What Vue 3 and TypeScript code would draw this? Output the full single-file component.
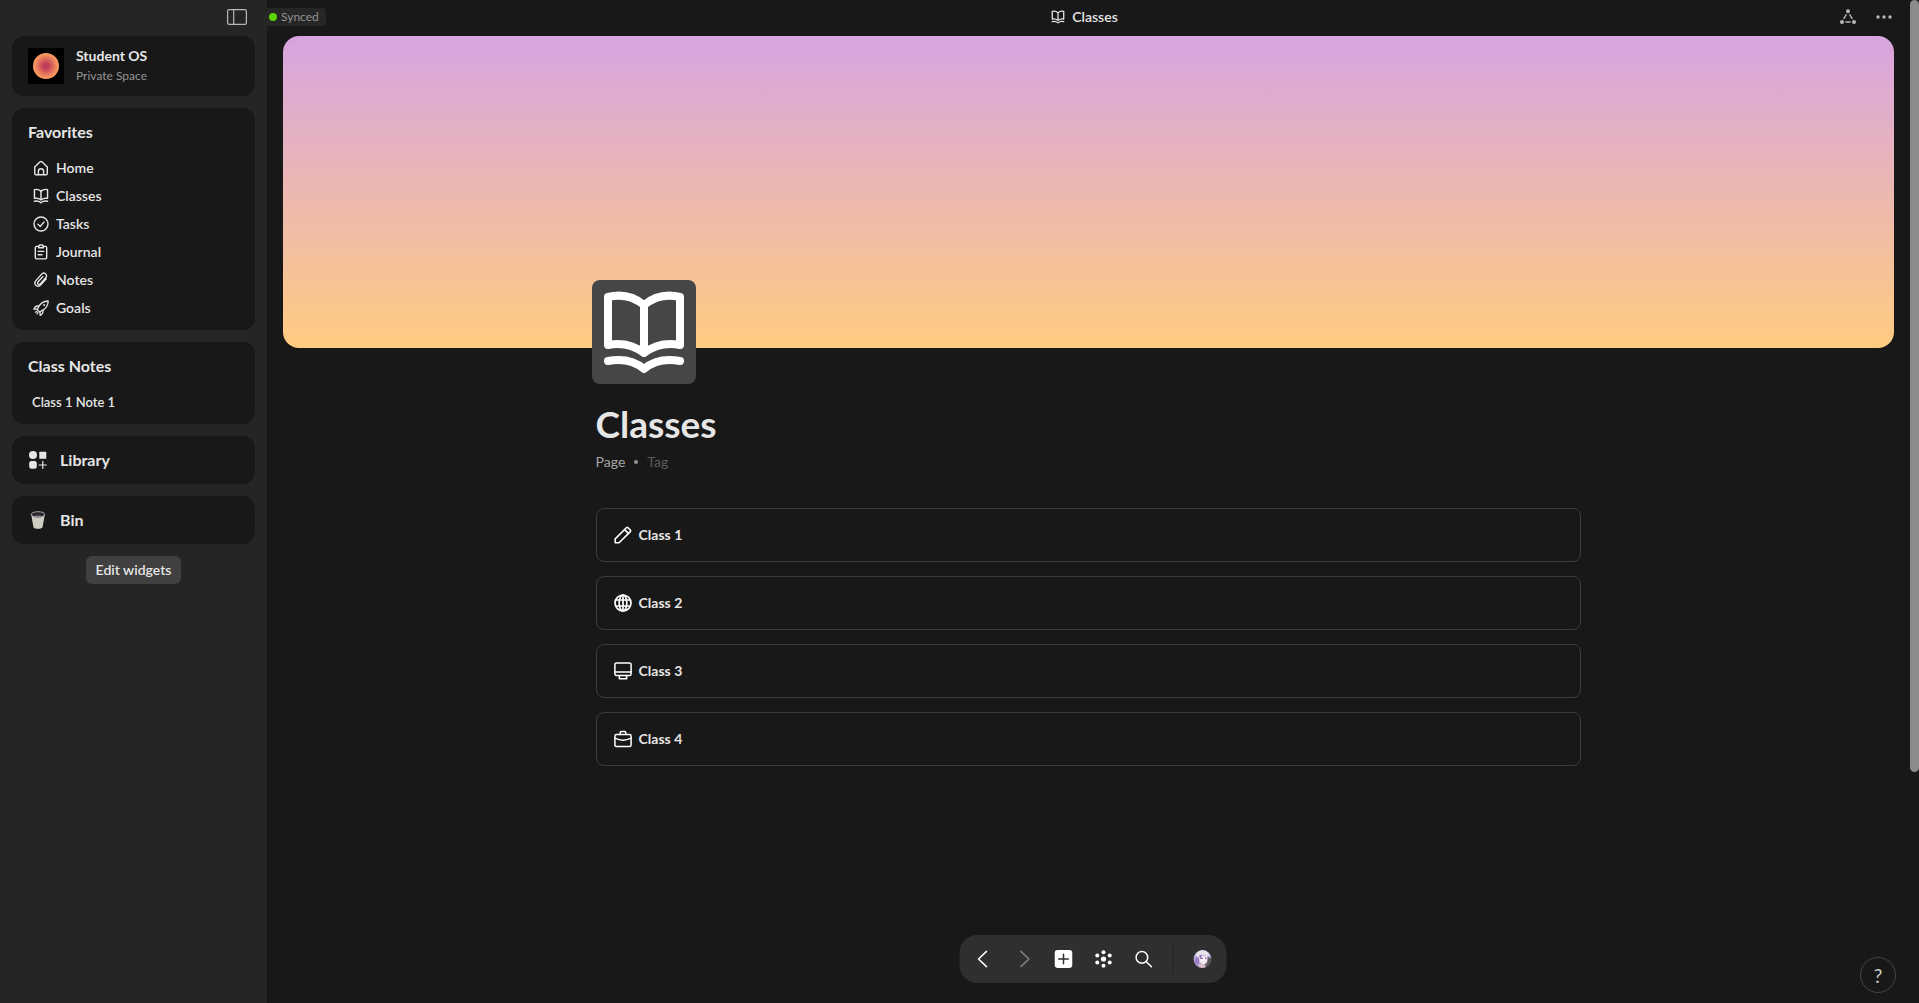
<script setup lang="ts">
import { h } from 'vue'

type Shape = [tag: string, attrs: Record<string, string | number>]
interface Glyph { box: string; width: number; shapes: Shape[] }

const line = (d: string): Shape => ['path', { d }]
const solid = (tag: string, attrs: Record<string, string | number>): Shape => [tag, { ...attrs, fill: 'currentColor', stroke: 'none' }]
const dot = (cx: number, cy: number, r: number) => solid('circle', { cx, cy, r })

const glyphs: Record<string, Glyph> = {
  panel: { box: '0 0 20 16', width: 1.2, shapes: [['rect', { x: 0.6, y: 0.6, width: 18.8, height: 14.8, rx: 1.6 }], line('M6.7 1V15')] },
  home: { box: '0 0 16 16', width: 1.4, shapes: [line('M1.7 7 7.1 1.8Q8 1 8.9 1.8L14.3 7V13.6Q14.3 14.8 13.1 14.8H2.9Q1.7 14.8 1.7 13.6Z'), line('M5.4 14.6V11.2Q5.4 8.8 8 8.8T10.6 11.2V14.6')] },
  book: { box: '8 7 88 88', width: 8, shapes: [line('M16 16Q36 11 52 24Q68 11 88 16V64Q68 60 52 72Q36 60 16 64Z'), line('M52 25V70'), line('M16 80Q38 76 52 88Q66 76 88 80')] },
  check: { box: '0 0 16 16', width: 1.4, shapes: [['circle', { cx: 8, cy: 8, r: 7 }], line('M5 8.3 7.2 10.4 11.1 6')] },
  clipboard: { box: '0 0 16 16', width: 1.4, shapes: [line('M5.6 2.4H3.6Q2.3 2.4 2.3 3.7V13.6Q2.3 14.9 3.6 14.9H12.4Q13.7 14.9 13.7 13.6V3.7Q13.7 2.4 12.4 2.4H10.4'), line('M5.6 3.8V2.6Q5.6 1 7.2 1H8.8Q10.4 1 10.4 2.6V3.8Z'), line('M5.2 7.4H10.8M5.2 10.8H9')] },
  clip: { box: '0 0 16 16', width: 1.4, shapes: [line('M13.2 6.9 7.8 12.9C4.7 16.3-.2 12.4 2.7 8.9L8.4 2.4C11-.6 15.2 2.7 12.8 5.7L7.5 11.8C5.9 13.6 3.6 11.8 5 10L9.8 4.6')] },
  rocket: { box: '0 0 16 16', width: 1.3, shapes: [line('M5 8.2C7 3.4 10.2 1 15.2 1 15.2 5.8 12.8 9 8 11.2L6.6 12 4.2 9.6Z'), line('M5.6 6.2C3.3 5.5 1.8 6.8.8 9.2L4.4 9.2M9.8 10.4C10.6 12.8 9.4 14.2 7.2 15.4L7 12'), line('M3.8 11.4 2.4 12.2M4.8 12.6 4 13.8'), dot(11.2, 5, 1)] },
  pencil: { box: '0 0 18 18', width: 1.6, shapes: [line('M1.2 12.9 12.4 1.7Q13.2 1 14 1.7L16.3 4Q17 4.8 16.3 5.6L5.1 16.8H1.2Z'), line('M10.6 3.6 14.4 7.4')] },
  globe: { box: '0 0 18 18', width: 1.7, shapes: [['circle', { cx: 9, cy: 9, r: 8 }], ['ellipse', { cx: 9, cy: 9, rx: 3.8, ry: 8 }], line('M9 1V17M1.8 6H16.2M1.8 12H16.2')] },
  monitor: { box: '0 0 18 18', width: 1.5, shapes: [['rect', { x: 0.9, y: 0.9, width: 16.2, height: 12.6, rx: 1.6 }], line('M1 10H17M5.6 13.7 5.2 16.7H12.8L12.4 13.7')] },
  briefcase: { box: '0 0 18 18', width: 1.5, shapes: [['rect', { x: 0.9, y: 4.6, width: 16.2, height: 12, rx: 1.6 }], line('M6.2 4.4V2.6Q6.2 1.5 7.3 1.5H10.7Q11.8 1.5 11.8 2.6V4.4M1 8.2Q9 12.2 17 8.2')] },
  library: { box: '0 0 18 18', width: 1.2, shapes: [dot(4, 4, 4), solid('rect', { x: 10.3, y: 0.8, width: 7, height: 7, rx: 0.6 }), solid('rect', { x: 0.2, y: 10, width: 7.6, height: 7.8, rx: 2.2 }), line('M13.8 10.4V17.6M10.2 14H17.4')] },
  graph: { box: '0 0 16 16', width: 1.3, shapes: [dot(8, 2.2, 2), dot(2, 13, 2), dot(14, 13, 2), line('M6.2 5.6 3.9 9.6M9.8 5.6 12.1 9.6M5.9 13H10.1')] },
  more: { box: '0 0 16 16', width: 1, shapes: [dot(2, 8, 1.7), dot(8, 8, 1.7), dot(14, 8, 1.7)] },
  back: { box: '0 0 18 18', width: 1.5, shapes: [line('M12 1.4 4 9 12 16.6')] },
  forward: { box: '0 0 18 18', width: 1.5, shapes: [line('M6.4 1.4 14.4 9 6.4 16.6')] },
  plus: { box: '0 0 18 18', width: 1.5, shapes: [solid('rect', { x: 0, y: 0, width: 18, height: 18, rx: 3.4 }), ['path', { d: 'M9 4.2V13.8M4.2 9H13.8', stroke: '#2f2f2f' }]] },
  nodes: { box: '0 0 18 18', width: 1, shapes: [dot(9, 9, 2.6), dot(9, 2.2, 2), dot(9, 15.8, 2), dot(2.8, 5.4, 2), dot(15.2, 5.4, 2), dot(2.8, 12.6, 2), dot(15.2, 12.6, 2)] },
  search: { box: '0 0 18 18', width: 1.5, shapes: [['circle', { cx: 7.4, cy: 7.4, r: 5.8 }], line('M11.7 11.7 17 16.8')] },
}

const Icon = (props: { name: string }) => {
  const g = glyphs[props.name]
  return h('svg', { viewBox: g.box, fill: 'none', stroke: 'currentColor', 'stroke-width': g.width, 'stroke-linecap': 'round', 'stroke-linejoin': 'round', 'aria-hidden': 'true' },
    g.shapes.map(([tag, attrs]) => h(tag, attrs)))
}
Icon.props = ['name']

const favorites = [
  { label: 'Home', icon: 'home' },
  { label: 'Classes', icon: 'book' },
  { label: 'Tasks', icon: 'check' },
  { label: 'Journal', icon: 'clipboard' },
  { label: 'Notes', icon: 'clip' },
  { label: 'Goals', icon: 'rocket' },
]
const classes = [
  { label: 'Class 1', icon: 'pencil' },
  { label: 'Class 2', icon: 'globe' },
  { label: 'Class 3', icon: 'monitor' },
  { label: 'Class 4', icon: 'briefcase' },
]
</script>

<template>
  <div class="app">
    <aside class="sidebar">
      <div class="sidebar-head">
        <button class="icon-button" aria-label="Toggle sidebar"><Icon name="panel" class="panel-icon" /></button>
      </div>

      <section class="card space">
        <svg class="space-icon" viewBox="0 0 36 36" aria-hidden="true">
          <defs>
            <radialGradient id="sun">
              <stop offset="0.2" stop-color="#c13f5b" />
              <stop offset="0.9" stop-color="#f9975f" />
            </radialGradient>
          </defs>
          <rect width="36" height="36" rx="2" fill="#000" />
          <circle cx="18" cy="18" r="13" fill="url(#sun)" />
        </svg>
        <div>
          <div class="space-name">Student OS</div>
          <div class="space-kind">Private Space</div>
        </div>
      </section>

      <nav class="card list" aria-label="Favorites">
        <h2>Favorites</h2>
        <a v-for="f in favorites" :key="f.label" href="#" class="item">
          <Icon :name="f.icon" class="item-icon" />{{ f.label }}
        </a>
      </nav>

      <nav class="card list" aria-label="Class Notes">
        <h2>Class Notes</h2>
        <a href="#" class="item note">Class 1 Note 1</a>
      </nav>

      <a href="#" class="card shortcut"><Icon name="library" class="shortcut-icon" />Library</a>
      <a href="#" class="card shortcut">
        <svg class="shortcut-icon" viewBox="0 0 18 18" aria-hidden="true">
          <path d="M2.2 3.4 4.4 16Q4.7 17.8 9 17.8T13.6 16L15.8 3.4Z" fill="#cfccc2" />
          <ellipse cx="9" cy="3.4" rx="6.8" ry="2.7" fill="#29262c" stroke="#b5b3b4" stroke-width="0.9" />
          <path d="M3.6 5.3Q9 3.8 14.4 5.3 12 7 9 7T3.6 5.3Z" fill="#8f8b93" />
        </svg>
        Bin
      </a>

      <button class="edit">Edit widgets</button>
    </aside>

    <main class="main">
      <div class="page">
        <header class="top">
          <div class="sync"><span class="sync-dot"></span>Synced</div>
          <div class="crumb"><Icon name="book" class="crumb-icon" />Classes</div>
          <div class="actions">
            <button class="icon-button" aria-label="Graph"><Icon name="graph" class="action-icon" /></button>
            <button class="icon-button" aria-label="More"><Icon name="more" class="action-icon" /></button>
          </div>
        </header>

        <div class="cover"></div>

        <article class="content">
          <div class="page-icon"><Icon name="book" class="page-glyph" /></div>
          <h1>Classes</h1>
          <div class="meta"><span>Page</span><span class="bullet"></span><span class="tag">Tag</span></div>
          <div class="classes">
            <a v-for="c in classes" :key="c.label" href="#" class="class-card">
              <Icon :name="c.icon" class="class-icon" />{{ c.label }}
            </a>
          </div>
        </article>
      </div>

      <div class="scroll"><div class="thumb"></div></div>

      <nav class="dock" aria-label="Navigation">
        <button class="dock-button" aria-label="Back"><Icon name="back" class="dock-icon" /></button>
        <button class="dock-button muted" aria-label="Forward"><Icon name="forward" class="dock-icon" /></button>
        <button class="dock-button" aria-label="Create"><Icon name="plus" class="dock-icon" /></button>
        <button class="dock-button" aria-label="Graph"><Icon name="nodes" class="dock-icon" /></button>
        <button class="dock-button" aria-label="Search"><Icon name="search" class="dock-icon" /></button>
        <span class="divider"></span>
        <button class="dock-button" aria-label="Profile">
          <svg class="dock-icon" viewBox="0 0 18 18" aria-hidden="true">
            <defs><clipPath id="round"><circle cx="9" cy="9" r="9" /></clipPath></defs>
            <g clip-path="url(#round)">
              <rect width="18" height="18" fill="#6c6a6d" />
              <path d="M0 7Q1 0 9-1 17 0 18 8L14 7 13 12 6 18H2L0 12Z" fill="#b8a6d8" />
              <path d="M2 5Q5 0 10 0 15 1 16 6L10 5 5 8Z" fill="#e9e4ea" />
              <path d="M6 7 13.5 5.5Q15 12 11.5 14L8.5 14.5 6 11Z" fill="#f6ecf3" />
              <path d="M2 8 5 7 5.5 13 3.5 15 1 12Z" fill="#9a7fc7" />
              <path d="M5.5 5.5 8.5 4.5 7 9Z" fill="#8e74bb" />
              <path d="M7 8.4H9M11.6 8H13" stroke="#7452a5" stroke-width="1.4" />
              <path d="M5.5 14.5 8 13.5 11.5 14.5 12 18H6Z" fill="#dcbcc6" />
              <path d="M15 9 18 8V16L13 17Z" fill="#555456" />
            </g>
          </svg>
        </button>
      </nav>

      <button class="help" aria-label="Help">?</button>
    </main>
  </div>
</template>

<style>
body {
  margin: 0;
  background: #181818;
}
</style>

<style scoped>
* {
  box-sizing: border-box;
}
.app {
  display: flex;
  min-height: 100vh;
  background: #181818;
  color: #e6e6e6;
  font: 600 14px/20px Lato, "Open Sans", sans-serif;
}
a {
  color: inherit;
  text-decoration: none;
}
button {
  padding: 0;
  border: 0;
  background: none;
  color: inherit;
  font: inherit;
  cursor: pointer;
}
svg {
  display: block;
  flex: none;
}
h1,
h2 {
  margin: 0;
  font-weight: 700;
}

.sidebar {
  display: flex;
  flex: none;
  flex-direction: column;
  gap: 12px;
  width: 267px;
  padding: 0 12px 12px;
  background: #252525;
}
.sidebar-head {
  display: flex;
  align-items: center;
  justify-content: flex-end;
  height: 34px;
  margin-bottom: -10px;
  padding-right: 8px;
}
.icon-button {
  color: #b8b8b8;
}
.panel-icon {
  width: 20px;
  height: 16px;
}
.card {
  border-radius: 12px;
  background: #181818;
}
.space {
  display: flex;
  align-items: center;
  gap: 12px;
  padding: 10px 16px;
}
.space-icon {
  width: 36px;
  height: 36px;
}
.space-name {
  font-weight: 700;
}
.space-kind {
  color: #949494;
  font-size: 12px;
  font-weight: 400;
}
.list {
  padding: 14px 16px 8px;
}
.list h2 {
  padding-bottom: 12px;
  font-size: 16px;
  line-height: 20px;
}
.item {
  display: flex;
  align-items: center;
  gap: 7px;
  height: 28px;
  padding: 0 4px 0 5px;
}
.note {
  padding-left: 4px;
  font-size: 13px;
}
.item-icon {
  width: 16px;
  height: 16px;
}
.shortcut {
  display: flex;
  align-items: center;
  gap: 13px;
  height: 48px;
  padding: 0 17px;
  font-size: 16px;
  font-weight: 700;
}
.shortcut-icon {
  width: 18px;
  height: 18px;
}
.edit {
  align-self: center;
  height: 28px;
  padding: 0 10px;
  border-radius: 6px;
  background: #404040;
}

.main {
  position: relative;
  display: flex;
  flex: 1;
  min-width: 0;
}
.page {
  flex: 1;
  min-width: 0;
}
.top {
  display: grid;
  grid-template-columns: 1fr auto 1fr;
  align-items: center;
  height: 34px;
  margin-bottom: 2px;
  padding-right: 8px;
}
.sync {
  display: flex;
  align-items: center;
  justify-self: start;
  gap: 4px;
  height: 18px;
  padding: 0 7px 0 2px;
  border-radius: 0 4px 4px 0;
  background: #262626;
  color: #949494;
  font-size: 12px;
  font-weight: 400;
}
.sync-dot {
  width: 8px;
  height: 8px;
  border-radius: 50%;
  background: #5dd400;
}
.crumb {
  display: flex;
  align-items: center;
  gap: 7px;
}
.crumb-icon {
  width: 14px;
  height: 14px;
}
.actions {
  display: flex;
  justify-self: end;
  gap: 20px;
  padding-right: 10px;
}
.action-icon {
  width: 16px;
  height: 16px;
}
.cover {
  height: 312px;
  margin: 0 16px;
  border-radius: 16px;
  background: linear-gradient(#d8a4e1, #ffcc81);
}
.content {
  width: 60%;
  margin: 0 auto;
}
.page-icon {
  position: relative;
  width: 104px;
  margin: -68px 0 18px -4px;
  padding: 8px;
  border-radius: 8px;
  background: #464646;
  color: #fff;
}
.page-glyph {
  width: 88px;
  height: 88px;
}
h1 {
  font-size: 37px;
  line-height: 44px;
}
.meta {
  display: flex;
  align-items: center;
  gap: 9px;
  margin: 6px 0 36px;
  color: #a6a6a6;
  font-weight: 400;
}
.bullet {
  width: 4px;
  height: 4px;
  border-radius: 50%;
  background: #949494;
}
.tag {
  color: #5c5c5c;
}
.classes {
  display: flex;
  flex-direction: column;
  gap: 14px;
}
.class-card {
  display: flex;
  align-items: center;
  gap: 7px;
  height: 54px;
  padding: 0 17px;
  border: 1px solid #3d3d3d;
  border-radius: 8px;
  font-weight: 700;
}
.class-icon {
  width: 18px;
  height: 18px;
  color: #fff;
}
.scroll {
  flex: none;
  width: 9px;
}
.thumb {
  height: 77vh;
  border-radius: 5px;
  background: #8b8b8b;
}
.dock {
  position: absolute;
  bottom: 20px;
  left: 50%;
  display: flex;
  align-items: center;
  gap: 12px;
  height: 48px;
  padding: 0 10px;
  border-radius: 18px;
  background: #2f2f2f;
  transform: translateX(-50%);
}
.dock-button {
  display: grid;
  place-items: center;
  width: 28px;
  height: 28px;
  color: #fff;
}
.muted {
  color: #808080;
}
.dock-icon {
  width: 18px;
  height: 18px;
}
.divider {
  width: 1px;
  height: 28px;
  margin: 0 3px;
  background: #252525;
}
.help {
  position: absolute;
  right: 23px;
  bottom: 10px;
  width: 36px;
  height: 36px;
  border: 1px solid #454545;
  border-radius: 50%;
  color: #c8c8c8;
  font-size: 20px;
  font-weight: 400;
}
</style>
